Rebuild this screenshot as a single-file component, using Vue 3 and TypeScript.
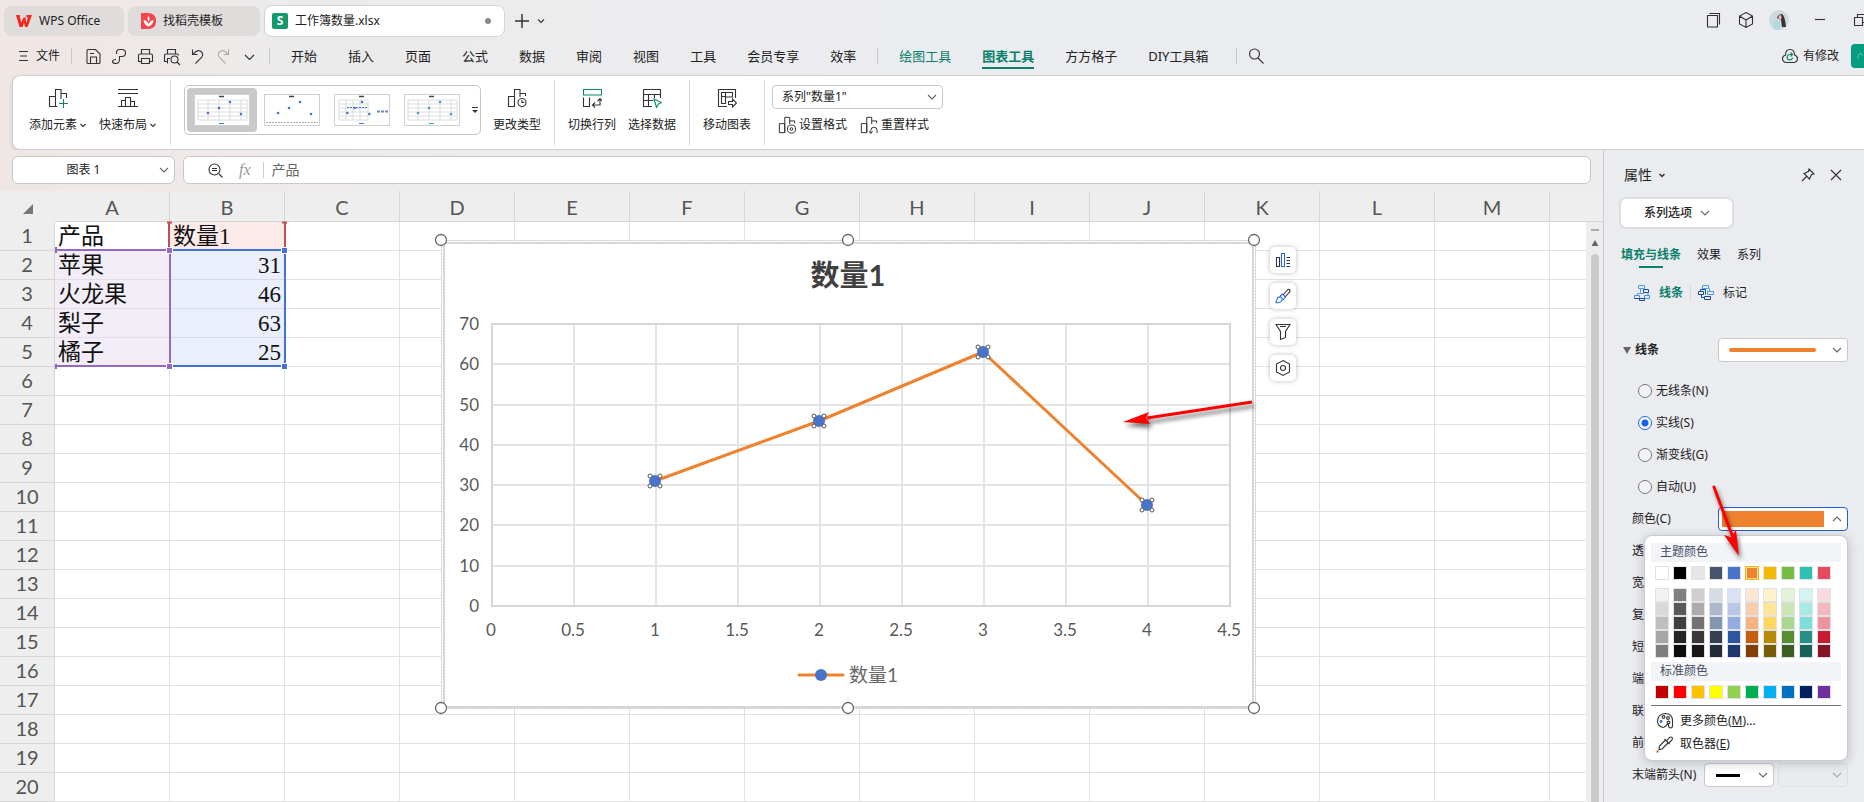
<script setup lang="ts">
import { ref } from 'vue'

interface Icon { name: string; d: string; faded?: boolean }
interface Row { label: string; value: string; num: number | null }

const quick: Icon[] = [
  { name: '保存', d: 'M3 16V3.5Q3 2.500 4 2.500H11.500L16 7V15.500Q16 16.500 15 16.500H4Q3 16.500 3 16M6.500 16.500V10H12.500V16.500M6 6.500H10' },
  { name: '输出', d: 'M6.500 7V5.500Q6.500 2.500 9.500 2.500H12Q15.500 2.500 15.500 6T12 9.500H9.500V12Q9.500 16.500 6 16.500Q2.500 16.500 2.500 14.500T6 12.500' },
  { name: '打印', d: 'M5.500 7V2.500H13.500V7M5.500 14.500H2.500V8.500Q2.500 7 4 7H15Q16.500 7 16.500 8.500V14.500H13.500M5.500 11.500H13.500V16.500H5.500Z' },
  { name: '打印预览', d: 'M5.500 7V2.500H13.500V7M5.500 14.500H2.500V8.500Q2.500 7 4 7H15Q16.500 7 16.500 8.500M5.500 16.500V11.500H8M16 12.500A3.500 3.500 0 1 1 9 12.500A3.500 3.500 0 1 1 16 12.500M15 15L18 18' },
  { name: '撤销', d: 'M4.500 2.500V7.500H9.500M4.500 7.500L8 4.500Q11 2.500 13.500 5T13.500 10.500L7.500 16.500' },
  { name: '恢复', d: 'M14.500 2.500V7.500H9.500M14.500 7.500L11 4.500Q8 2.500 5.500 5T5.500 10.500L11.500 16.500', faded: true },
  { name: '更多', d: 'M5 8L9.500 12.500L14 8' },
]

const menus = ['开始', '插入', '页面', '公式', '数据', '审阅', '视图', '工具', '会员专享', '效率']

const chartIcon = 'M1.500 18.500V8.500H7.500V18.500ZM7.500 18.500V1.500H13V9M13 5.500H18.500V8'

const columns = ['A', 'B', 'C', 'D', 'E', 'F', 'G', 'H', 'I', 'J', 'K', 'L', 'M']
const filled: Row[] = [
  { label: '产品', value: '数量1', num: null },
  { label: '苹果', value: '', num: 31 },
  { label: '火龙果', value: '', num: 46 },
  { label: '梨子', value: '', num: 63 },
  { label: '橘子', value: '', num: 25 },
]
const rows: Row[] = Array.from({ length: 20 }, (_, i) => filled[i] ?? { label: '', value: '', num: null })

const plot = { left: 492, right: 1230, top: 324, bottom: 606 }
const px = (v: number) => Math.round(plot.left + (v / 4.5) * (plot.right - plot.left))
const py = (v: number) => Math.round(plot.bottom - (v / 70) * (plot.bottom - plot.top))
const xs = [0, 0.5, 1, 1.5, 2, 2.5, 3, 3.5, 4, 4.5]
const ys = [0, 10, 20, 30, 40, 50, 60, 70]
const points = [31, 46, 63, 25].map((v, i) => ({ x: px(i + 1) - 1, y: py(v) }))
const linePoints = points.map(p => `${p.x},${p.y}`).join(' ')
const handles = [[441, 240], [848, 240], [1254, 240], [441, 708], [848, 708], [1254, 708]]

const thumbs = [
  { grid: true, color: '#4874cb', dashed: false },
  { grid: false, color: '#4874cb', dashed: false },
  { grid: true, color: '#4874cb', dashed: true },
  { grid: true, color: '#3aa6b9', dashed: false },
]
const dots = [[14, 19], [25, 14], [36, 8], [47, 20]]

const lineKind = ref('实线(S)')
const kinds = ['无线条(N)', '实线(S)', '渐变线(G)', '自动(U)']
const covered = ['透', '宽', '复', '短', '端', '联', '前']

const theme = ['#ffffff', '#000000', '#e7e6e6', '#44546a', '#4874cb', '#ee822f', '#f2ba02', '#75bd42', '#30c0b4', '#e54c5e']
const shades = [
  ['#f2f2f2', '#808080', '#d0cece', '#d6dce5', '#dae3f5', '#fce6d5', '#fff2cb', '#e3f2d9', '#d3f5f2', '#fadbdf'],
  ['#d9d9d9', '#595959', '#afabab', '#adb9ca', '#b6c7ea', '#f8cdac', '#ffe596', '#c8e5b3', '#a8ebe6', '#f5b7bf'],
  ['#bfbfbf', '#404040', '#767171', '#8497b0', '#91acdf', '#f5b482', '#ffd85e', '#acd78e', '#7ddfd8', '#ef949e'],
  ['#a6a6a6', '#262626', '#3b3838', '#333f50', '#2c55a2', '#c45f10', '#b58b02', '#578f30', '#249087', '#c81d31'],
  ['#7f7f7f', '#0d0d0d', '#181717', '#222a35', '#1d386c', '#823f0b', '#795d01', '#3a5f20', '#18605a', '#861422'],
]
const standard = ['#c00000', '#ff0000', '#ffc000', '#ffff00', '#92d050', '#00b050', '#00b0f0', '#0070c0', '#002060', '#7030a0']
</script>

<template>
  <div class="app">
    <header class="titlebar">
      <button class="doc wps">
        <svg width="16" height="14" viewBox="0 0 16 14"><path d="M0 1H4L5.500 8L7.500 3.500H9.500L10.500 8L12 3.500H9.500L10 1H16L11.500 13H9L8 9L6.500 13H3.500Z" fill="#f2291e" /><path d="M4 1L5.500 8M10 1L10.500 8" stroke="#fff" stroke-width="0.600" /></svg>
        WPS Office
      </button>
      <button class="doc docer">
        <svg width="15" height="16" viewBox="0 0 15 16"><path d="M0 0H7Q15 0 15 8T7 16H0Z" fill="#f0464c" /><path d="M7.500 13.500Q3 12 2.500 7Q6 7.500 7.500 11Q9 7.500 12.500 7Q12 12 7.500 13.500M7.500 8.500Q5.500 6 7.500 2.500Q9.500 6 7.500 8.500" fill="#fff" /></svg>
        找稻壳模板
      </button>
      <button class="doc current">
        <span class="sheet-logo">S</span>
        <span class="doc-name">工作簿数量.xlsx</span>
        <i class="dirty"></i>
      </button>
      <button class="plain new-tab" aria-label="新建"><svg width="16" height="16" viewBox="0 0 16 16"><path d="M8 1V15M1 8H15" stroke="#333" stroke-width="1.500" /></svg></button>
      <button class="plain" aria-label="标签列表"><svg width="10" height="10" viewBox="0 0 10 10" class="line"><path d="M2 3.500L5 6.500L8 3.500" /></svg></button>
      <div class="window-tools">
        <button class="plain" aria-label="窗口"><svg width="18" height="18" viewBox="0 0 18 18" class="line"><path d="M2.500 4.500H12.500V16H2.500ZM4.500 2.500H14.500V13.500" /></svg></button>
        <button class="plain" aria-label="应用"><svg width="18" height="18" viewBox="0 0 18 18" class="line"><path d="M9 1.500L15.500 5V13L9 16.500L2.500 13V5ZM2.500 5L9 9L15.500 5M9 9V16.500" /></svg></button>
        <button class="plain avatar" aria-label="账户">
          <svg width="20" height="20" viewBox="0 0 20 20"><circle cx="10" cy="10" r="10" fill="#ccd9dd" /><path d="M8 8Q9 4 13 4Q16 6 17 17L13 17L12 10Z" fill="#3a3033" /><ellipse cx="11" cy="7.500" rx="1.600" ry="2.400" fill="#e6bda9" /><path d="M4 19Q4 12 8 10L11 12Q12 16 11 20Z" fill="#b4d8e2" /></svg>
        </button>
        <button class="plain minimise" aria-label="最小化"><svg width="18" height="18" viewBox="0 0 18 18" class="line"><path d="M4 8.500H14" /></svg></button>
        <button class="plain" aria-label="还原"><svg width="18" height="18" viewBox="0 0 18 18" class="line"><path d="M3.500 6.500H11.500V14.500H3.500ZM6.500 6.500V3.500H14.500V11.500H11.500" /></svg></button>
      </div>
    </header>

    <nav class="menubar">
      <button class="plain file"><svg width="11" height="12" viewBox="0 0 11 12" class="line"><path d="M1 1.500H10M2 6H9M1 10.500H10" /></svg>文件</button>
      <i class="bar"></i>
      <button v-for="q in quick" :key="q.name" class="plain quick" :class="{ faded: q.faded }" :aria-label="q.name">
        <svg width="19" height="19" viewBox="0 0 19 19" class="line"><path :d="q.d" /></svg>
      </button>
      <i class="bar after-quick"></i>
      <div class="menus">
        <button v-for="m in menus" :key="m" class="plain menu">{{ m }}</button>
        <i class="bar"></i>
        <button class="plain menu green">绘图工具</button>
        <button class="plain menu green chosen">图表工具</button>
        <button class="plain menu">方方格子</button>
        <button class="plain menu">DIY工具箱</button>
      </div>
      <i class="bar after-menus"></i>
      <button class="plain search" aria-label="搜索"><svg width="18" height="18" viewBox="0 0 18 18" class="line"><circle cx="7.500" cy="7" r="5" /><path d="M11 11L16.500 16.500" /></svg></button>
      <button class="plain changed">
        <svg width="18" height="16" viewBox="0 0 18 16" class="line"><path d="M5 14.500Q1.500 14 1.500 10.500Q1.500 8 4.500 7Q4.500 1.500 9 1.500T13.500 7Q16.500 8 16.500 10.500Q16.500 14 13 14.500Z" /><path d="M11.500 9.500A2.700 2.700 0 1 1 9 6.500H11M9.500 4.500L11.500 6.500L9.500 8.500" stroke="#0b8a5f" /></svg>
        有修改
      </button>
      <button class="share" aria-label="分享"><svg width="18" height="16" viewBox="0 0 18 16"><path d="M5 14.500Q1.500 14 1.500 10.500Q1.500 8 4.500 7Q4.500 1.500 9 1.500T13.500 7" fill="none" stroke="#fff" /></svg></button>
    </nav>

    <section class="ribbon">
      <button class="tool wide">
        <svg width="20" height="20" viewBox="0 0 20 20" class="line"><path d="M1.500 18.500V8.500H7.500V18.500ZM7.500 18.500H9.500M7.500 18.500V1.500H13V11M13 5.500H18.500V10" /><path d="M15.500 11V20M11 15.500H20" stroke="#0b8a5f" /></svg>
        <span>添加元素<svg width="8" height="8" viewBox="0 0 8 8" class="line caret"><path d="M1.500 3L4 5.500L6.500 3" /></svg></span>
      </button>
      <button class="tool wide">
        <svg width="20" height="20" viewBox="0 0 20 20" class="line"><path d="M0 1.500H20M0 5.500H20M0 18.500H20M3.500 18.500V12.500H7.500M7.500 18.500V9.500H12.500V18.500M12.500 13.500H16.500V18.500" /></svg>
        <span>快速布局<svg width="8" height="8" viewBox="0 0 8 8" class="line caret"><path d="M1.500 3L4 5.500L6.500 3" /></svg></span>
      </button>
      <i class="divider"></i>
      <div class="gallery">
        <button v-for="(t, i) in thumbs" :key="i" class="thumb" :class="{ picked: i === 0 }" :aria-label="'样式 ' + (i + 1)">
          <svg width="56" height="32" viewBox="0 0 56 32">
            <rect x="0.500" y="0.500" width="55" height="31" fill="#fff" stroke="#d0d0d0" />
            <path v-if="t.grid" :d="t.dashed ? 'M5 6H34M5 10H34M5 14H34M5 18H34M5 22H34M5 26H34M5 6V26M12 6V26M19 6V26M26 6V26M34 6V26' : 'M4 6H53M4 10H53M4 14H53M4 18H53M4 22H53M4 26H53M4 6V26M14 6V26M25 6V26M36 6V26M47 6V26M53 6V26'" stroke="#dcdcdc" fill="none" />
            <path v-else d="M2 28.500H54" stroke="#aaa" stroke-dasharray="2 1" />
            <path d="M25 2.500H30" stroke="#444" stroke-width="1.500" />
            <path v-if="t.dashed" d="M13 13.500H34" stroke="#4874cb" stroke-dasharray="2 1" />
            <path v-if="t.dashed" d="M43 17.500H54" stroke="#6b87bd" stroke-width="2" stroke-dasharray="3 1" />
            <circle v-for="(d, k) in dots" :key="k" :cx="t.dashed ? 4 + d[0] * 2 / 3 : d[0]" :cy="d[1]" r="1.300" :fill="t.color" />
            <path v-if="t.grid" d="M25 29.500H30" :stroke="t.color" />
          </svg>
        </button>
        <button class="plain gallery-more" aria-label="更多样式"><svg width="8" height="8" viewBox="0 0 8 8"><path d="M1 1.500H7" stroke="#333" /><path d="M1 4H7L4 7Z" fill="#333" /></svg></button>
      </div>
      <button class="tool">
        <svg width="20" height="20" viewBox="0 0 20 20" class="line"><path :d="chartIcon" /><circle cx="15" cy="14.500" r="4" /><path d="M15 12V14.500H17.500" /></svg>
        <span>更改类型</span>
      </button>
      <i class="divider"></i>
      <button class="tool">
        <svg width="20" height="20" viewBox="0 0 20 20" class="line"><path d="M1.500 1.500H19.500V7H1.500Z" stroke="#0b8a5f" /><path d="M1.500 9.500V18.500H7.500V9.500M10.500 17H18V11M13 14.500L10.500 17L13 19.500M15.500 13L18 10.500L20 13" /></svg>
        <span>切换行列</span>
      </button>
      <button class="tool">
        <svg width="20" height="20" viewBox="0 0 20 20" class="line"><path d="M10 18.500H1.500V1.500H18.500V10M1.500 6.500H18.500M1.500 12.500H11M6.500 6.500V18.500M12.500 6.500V10" /><path d="M12 11L19.500 14.500L16.500 16L14.500 19.500Z" stroke="#0b8a5f" /></svg>
        <span>选择数据</span>
      </button>
      <i class="divider"></i>
      <button class="tool">
        <svg width="20" height="20" viewBox="0 0 20 20" class="line"><path d="M10 18.500H1.500V1.500H18.500V10M4.500 15.500V4.500H15.500V9H8.500V15.500ZM4.500 8.500H8.500M8.500 4.500V9M11.500 13.500H15.500V11L19.500 15L15.500 19V16.500H11.500Z" /></svg>
        <span>移动图表</span>
      </button>
      <i class="divider"></i>
      <div class="format">
        <div class="select element">
          <select aria-label="图表元素"><option>系列"数量1"</option></select>
          <svg width="10" height="8" viewBox="0 0 10 8" class="line arrow"><path d="M1 2L5 6L9 2" /></svg>
        </div>
        <div class="format-row">
          <button class="plain"><svg width="18" height="18" viewBox="0 0 20 20" class="line"><path :d="chartIcon" /><circle cx="15" cy="14.500" r="4.500" /><circle cx="15" cy="14.500" r="1.500" /></svg>设置格式</button>
          <button class="plain"><svg width="18" height="18" viewBox="0 0 20 20" class="line"><path :d="chartIcon" /><path d="M12 19V16Q12 12.500 15.500 12.500T19 16V19M10 17L12 19.500L14 17" /></svg>重置样式</button>
        </div>
      </div>
    </section>

    <div class="work">
      <main class="book">
        <div class="formula">
          <div class="select namebox">
            <select aria-label="名称框"><option>图表 1</option></select>
            <svg width="10" height="8" viewBox="0 0 10 8" class="line arrow"><path d="M1 2L5 6L9 2" /></svg>
          </div>
          <div class="editor">
            <svg width="17" height="17" viewBox="0 0 17 17" class="line"><circle cx="7.500" cy="7.500" r="5.500" /><path d="M5 6.500H10M5 8.500H10M12 12L15.500 15.500" /></svg>
            <span class="fx">fx</span>
            <input aria-label="编辑栏" value="产品" />
          </div>
        </div>

        <div class="canvas">
          <table class="cells">
            <colgroup><col class="gutter" /><col v-for="c in columns" :key="c" class="column" /><col /></colgroup>
            <thead>
              <tr>
                <th class="corner"><svg width="10" height="10" viewBox="0 0 10 10"><path d="M10 0V10H0Z" fill="#777" /></svg></th>
                <th v-for="c in columns" :key="c">{{ c }}</th>
                <th class="tail"></th>
              </tr>
            </thead>
            <tbody>
              <tr v-for="(r, i) in rows" :key="i">
                <th>{{ i + 1 }}</th>
                <td :class="{ category: i > 0 && i < 5 }">{{ r.label }}</td>
                <td :class="{ seriesname: i === 0, values: i > 0 && i < 5 }">{{ r.num ?? r.value }}</td>
                <td v-for="c in 11" :key="c"></td>
                <td class="tail"></td>
              </tr>
            </tbody>
          </table>

          <svg class="ranges" width="240" height="160" viewBox="50 215 240 160">
            <path d="M169 222V247M285 222V247" stroke="#c0504d" stroke-width="2" />
            <path d="M167 222.500H172M282 222.500H287" stroke="#c0504d" stroke-width="2" />
            <path d="M56 250H170V366H56" fill="none" stroke="#9467c0" stroke-width="2" />
            <path d="M56 247V253M56 364V369" stroke="#9467c0" stroke-width="2" />
            <path d="M170 250H285V366H170" fill="none" stroke="#4472d0" stroke-width="2" />
            <path d="M170 250V366" stroke="#9467c0" stroke-width="2" />
            <g stroke="#fff">
              <rect x="166.500" y="247.500" width="6" height="6" fill="#9467c0" /><rect x="166.500" y="363.500" width="6" height="6" fill="#9467c0" />
              <rect x="281.500" y="247.500" width="6" height="6" fill="#4472d0" /><rect x="281.500" y="363.500" width="6" height="6" fill="#4472d0" />
            </g>
          </svg>

          <svg class="chart" width="834" height="488" viewBox="431 230 834 488">
            <rect x="441" y="240" width="814" height="468" fill="#fff" />
            <rect x="441.500" y="240.500" width="814" height="468" fill="none" stroke="#c8c8c8" stroke-dasharray="2 1" />
            <rect x="444" y="243" width="809" height="464" fill="#fff" stroke="#d6d6d6" stroke-width="2" />
            <text x="848" y="286" class="chart-title">数量1</text>
            <g stroke="#e3e3e3" stroke-width="2">
              <line v-for="x in xs" :key="x" :x1="px(x)" :x2="px(x)" :y1="plot.top" :y2="plot.bottom" />
              <line v-for="y in ys" :key="y" :x1="plot.left" :x2="plot.right" :y1="py(y)" :y2="py(y)" />
            </g>
            <rect :x="plot.left" :y="plot.top" :width="plot.right - plot.left" :height="plot.bottom - plot.top" fill="none" stroke="#d6d6d6" stroke-width="2" />
            <text v-for="y in ys" :key="'y' + y" x="479" :y="py(y) + 6" class="tick y">{{ y }}</text>
            <text v-for="x in xs" :key="'x' + x" :x="px(x) - 1" y="636" class="tick">{{ x }}</text>
            <polyline :points="linePoints" fill="none" stroke="#ee822f" stroke-width="3" stroke-linejoin="round" />
            <g v-for="p in points" :key="p.x">
              <circle :cx="p.x" :cy="p.y" r="6" fill="#4874cb" />
              <g fill="#fff" stroke="#555">
                <circle :cx="p.x - 5" :cy="p.y - 5" r="2" /><circle :cx="p.x + 5" :cy="p.y - 5" r="2" />
                <circle :cx="p.x - 5" :cy="p.y + 5" r="2" /><circle :cx="p.x + 5" :cy="p.y + 5" r="2" />
              </g>
            </g>
            <path d="M799 675H843" stroke="#ee822f" stroke-width="3" stroke-linecap="round" />
            <circle cx="821" cy="675" r="6" fill="#4874cb" />
            <text x="849" y="682" class="legend">数量1</text>
            <circle v-for="(h, i) in handles" :key="i" :cx="h[0]" :cy="h[1]" r="5.500" fill="#fff" stroke="#666" stroke-width="1.300" />
            <g class="shadowed"><path d="M1252 402L1147 418" stroke="#f00" stroke-width="3" /><path d="M1123 422L1149 412L1146 418L1150 424Z" fill="#f00" /></g>
          </svg>

          <div class="chart-tools">
            <button aria-label="图表元素"><svg width="16" height="16" viewBox="0 0 16 16" class="line"><path d="M1.500 5.500H4.500V14.500H1.500ZM11.500 5.500H15M11.500 8.500H15M11.500 11.500H15M11.500 14.500H15" /><path d="M6.500 1.500H9.500V14.500H6.500Z" stroke="#2468f2" /></svg></button>
            <button aria-label="图表样式"><svg width="16" height="16" viewBox="0 0 16 16" class="line"><path d="M8 7L13 1.500Q15 1 15 3.500L10 9" /><path d="M0.500 14.500Q2 13 2 11Q3 8.500 5.500 9Q8 10 7 12.500Q5 15.500 0.500 14.500M5.500 9V7.500L7.500 6L10.500 9L8.500 11.500H7" stroke="#2468f2" /></svg></button>
            <button aria-label="图表筛选器"><svg width="16" height="18" viewBox="0 0 16 18" class="line"><path d="M1 1.500H15L10.500 8.500V14.500L5.500 16.500V8.500ZM5 3.500H11" /></svg></button>
            <button aria-label="设置"><svg width="16" height="18" viewBox="0 0 16 18" class="line"><path d="M8 1.500L14.500 5V13L8 16.500L1.500 13V5Z" /><circle cx="8" cy="9" r="2.500" /></svg></button>
          </div>

          <div class="scroll">
            <i class="split"></i>
            <svg width="8" height="6" viewBox="0 0 8 6"><path d="M4 0L7.500 6H0.500Z" fill="#666" /></svg>
            <i class="track"></i>
          </div>
        </div>
      </main>

      <aside class="panel">
        <div class="panel-head">
          <button class="plain panel-title">属性<svg width="8" height="8" viewBox="0 0 8 8" class="line caret"><path d="M1.500 3L4 5.500L6.500 3" stroke-width="1.500" /></svg></button>
          <button class="plain" aria-label="固定"><svg width="14" height="14" viewBox="0 0 14 14" class="line"><path d="M8 1L13 6L10.500 6.500L8.500 11L3 5.500L7.500 3.500ZM5.500 8.500L1 13" /></svg></button>
          <button class="plain close" aria-label="关闭"><svg width="12" height="12" viewBox="0 0 12 12" class="line"><path d="M1 1L11 11M11 1L1 11" /></svg></button>
        </div>
        <button class="series">系列选项<svg width="10" height="8" viewBox="0 0 10 8" class="line soft"><path d="M1 2L5 6L9 2" /></svg></button>
        <div class="panel-tabs">
          <button class="plain on">填充与线条</button><button class="plain">效果</button><button class="plain">系列</button>
        </div>
        <div class="sub-tabs">
          <button class="plain on"><svg width="16" height="16" viewBox="0 0 16 16" fill="none"><path d="M4.500 0.500H10.500V3.500H4.500ZM6.500 3.500V7.500M3.500 11V8.500H10M14 8V11" stroke="#4e9cf0" /><path d="M9.500 4.500H14.500V7.500H9.500Z" stroke="#174a9c" /><path d="M10.500 10.500H15.500V13.500H10.500ZM0.500 10.500H5.500V13.500H0.500Z" stroke="#4e8cf0" /><path d="M5.500 13.500H10.500V15.500H5.500ZM0.500 13.500H5.500" stroke="#174a9c" /></svg>线条</button>
          <i class="bar"></i>
          <button class="plain"><svg width="16" height="16" viewBox="0 0 16 16" fill="none"><path d="M4.500 3.500V0.500H10.500V3.500H4.500M9.500 6.500H15.500V9.500H9.500ZM11.500 3.500V6.500" stroke="#4e9cf0" /><path d="M0.500 6.500H5.500V9.500H0.500ZM2.500 6.500V4.500H7.500V9.500M3.500 9.500V12.500H6M6.500 11.500H12.500V14.500H6.500Z" stroke="#174a9c" /></svg>标记</button>
        </div>
        <div class="section">
          <button class="plain section-name"><svg width="8" height="7" viewBox="0 0 8 7"><path d="M0 0H8L4 7Z" fill="#666" /></svg>线条</button>
          <div class="select field">
            <select aria-label="线条样式"></select>
            <i class="sample"></i>
            <svg width="10" height="8" viewBox="0 0 10 8" class="line arrow"><path d="M1 2L5 6L9 2" /></svg>
          </div>
        </div>
        <div class="options">
          <label v-for="k in kinds" :key="k" class="row option"><input v-model="lineKind" type="radio" name="kind" :value="k" />{{ k }}</label>
          <div class="row">
            <label for="line-color">颜色(C)</label>
            <div class="select field open">
              <select id="line-color"></select>
              <i class="color"></i>
              <svg width="10" height="8" viewBox="0 0 10 8" class="line arrow"><path d="M1 6L5 2L9 6" /></svg>
            </div>
            <div class="popup">
              <h4>主题颜色</h4>
              <div class="swatches">
                <button v-for="(c, i) in theme" :key="c" class="swatch" :class="{ active: i === 5 }" :style="{ background: c }" :aria-label="c"></button>
              </div>
              <div class="swatches shades">
                <template v-for="(line, i) in shades" :key="i">
                  <button v-for="c in line" :key="c" class="swatch" :style="{ background: c }" :aria-label="c"></button>
                </template>
              </div>
              <h4>标准颜色</h4>
              <div class="swatches">
                <button v-for="c in standard" :key="c" class="swatch" :style="{ background: c }" :aria-label="c"></button>
              </div>
              <hr />
              <button class="plain action"><svg width="18" height="18" viewBox="0 0 18 18" class="line"><path d="M9 1.500Q16.500 1.500 16.500 9V13.500Q16.500 16 14.500 16T12.500 13.500T10.500 13Q9.500 15.500 7 15.500Q1.500 14 1.500 9Q2 2 9 1.500Z" /><circle cx="7.500" cy="5" r="1.400" /><circle cx="12" cy="6" r="1.400" /><circle cx="12.500" cy="10.500" r="1.400" /><circle cx="5" cy="9.500" r="1.400" fill="#2468f2" stroke="none" /></svg><span>更多颜色(<u>M</u>)...</span></button>
              <button class="plain action"><svg width="18" height="18" viewBox="0 0 18 18" class="line"><path d="M9.500 5L3.500 11L3 14.500L6 14L12.500 7.500M8.500 4L13.500 9M10.500 6L13.500 2.500Q15 1.500 16 2.500T16 5L13 8" /><rect x="0.500" y="15.500" width="2" height="2" fill="#c45f10" stroke="none" /></svg><span>取色器(<u>E</u>)</span></button>
            </div>
            <svg class="pointer shadowed" width="40" height="80" viewBox="1706 480 40 80"><path d="M1714 487L1732 535" stroke="#f00" stroke-width="3" stroke-linecap="round" /><path d="M1739 556L1724 535L1731 537L1736 530Z" fill="#f00" /></svg>
          </div>
          <div v-for="c in covered" :key="c" class="row">{{ c }}</div>
          <div class="row">
            <label for="end-arrow">末端箭头(N)</label>
            <div class="ends">
              <div class="select"><select id="end-arrow"></select><i class="dash"></i><svg width="10" height="8" viewBox="0 0 10 8" class="line arrow"><path d="M1 2L5 6L9 2" /></svg></div>
              <div class="select off"><select disabled aria-label="箭头大小"></select><svg width="10" height="8" viewBox="0 0 10 8" class="line arrow"><path d="M1 2L5 6L9 2" /></svg></div>
            </div>
          </div>
        </div>
      </aside>
    </div>
  </div>
</template>

<style>
body { overflow: hidden; }
</style>

<style scoped>
.app {
  min-height: 100vh;
  display: flex;
  flex-direction: column;
  overflow: hidden;
  background: linear-gradient(90deg, #f0e6e4 0, #ecebeb 300px, #ebecf0 900px);
  font: 12px/16px "Noto Sans", "Noto Sans CJK SC", sans-serif;
  color: #222;
}
.app * { box-sizing: border-box; }
button, select, input { font: inherit; color: inherit; }
button { padding: 0; border: 0; background: none; white-space: nowrap; }
.plain { display: flex; align-items: center; }
.line { fill: none; stroke: #333; stroke-width: 1.100; flex: none; }
.caret { margin-left: 2px; }
.bar { width: 1px; height: 16px; background: #c9c9cc; flex: none; }

.titlebar { display: flex; align-items: center; gap: 4px; height: 37px; padding: 5px 0 0 4px; }
.doc { display: flex; align-items: center; gap: 7px; height: 30px; padding: 0 12px; border-radius: 8px; background: #e0dcdb; }
.wps { width: 120px; }
.docer { width: 132px; padding-left: 13px; }
.current { width: 241px; height: 32px; padding: 0 13px 0 7px; background: #fff; border: 1px solid #d4d4d4; }
.sheet-logo { width: 16px; height: 16px; border-radius: 2px; background: #13996a; color: #fff; font-weight: 700; }
.doc-name { flex: 1; text-align: left; }
.dirty { width: 6px; height: 6px; border-radius: 50%; background: #8a8a8a; }
.new-tab { margin-left: 5px; margin-right: 2px; }
.window-tools { display: flex; align-items: center; gap: 14px; margin-left: auto; margin-right: -5px; }
.window-tools .plain { margin-bottom: 3px; }
.avatar { margin-right: 8px; }
.window-tools .minimise { margin-right: 8px; }

.menubar { display: flex; align-items: center; height: 38px; padding-left: 18px; overflow: hidden; flex: none; }
.file { gap: 7px; margin-right: 11px; }
.quick { width: 26px; height: 26px; justify-content: center; }
.bar + .quick { margin-left: 8px; }
.faded { opacity: 0.350; }
.after-quick { margin: 0 21px 0 7px; }
.menus { display: flex; align-items: center; gap: 31px; font-size: 13px; }
.menus .bar { margin: 0 -10px; }
.menu { height: 26px; border-bottom: 2px solid transparent; border-top: 2px solid transparent; }
.green { color: #08806a; }
.chosen { font-weight: 700; border-bottom-color: #08806a; }
.after-menus { margin-left: 28px; }
.search { margin-left: 10px; }
.changed { gap: 4px; margin-left: auto; margin-right: 12px; }
.share { width: 13px; height: 24px; padding-left: 6px; border-radius: 4px 0 0 4px; background: #059c7f; overflow: hidden; display: flex; align-items: center; }

.ribbon {
  display: flex;
  height: 75px;
  flex: none;
  margin-left: 12px;
  padding-left: 10px;
  background: #fff;
  border: 1px solid #cfcfd1;
  border-right: 0;
  border-radius: 8px 0 0 8px;
  box-shadow: 0 2px 4px #0002;
}
.tool { width: 60px; display: flex; flex-direction: column; align-items: center; padding-top: 12px; gap: 9px; height: 73px; }
.wide { width: 70px; }
.divider { width: 1px; margin: 4px 7px; background: #d6d6d6; flex: none; }
.gallery { display: flex; align-items: center; width: 297px; height: 50px; margin: 9px 6px 0 6px; padding-left: 2px; border: 1px solid #c6c6c6; border-radius: 5px; }
.thumb { width: 70px; height: 44px; border-radius: 4px; display: flex; align-items: center; justify-content: center; flex: none; }
.picked { background: #c9c9c9; }
.gallery-more { margin-left: 4px; }
.format { padding-top: 9px; }
.select { position: relative; height: 24px; }
.select select {
  display: block;
  width: 100%;
  height: 100%;
  appearance: none;
  border: 1px solid #c6c8cc;
  border-radius: 4px;
  background: #fff;
  padding: 0 9px;
}
.select .arrow { position: absolute; right: 6px; top: calc(50% - 4px); pointer-events: none; stroke: #666; }
.soft { stroke: #666; }
.select i { position: absolute; pointer-events: none; }
.element { width: 171px; }
.format-row { display: flex; gap: 13px; padding: 7px 0 0 6px; }
.format-row .plain { gap: 3px; }

.work { display: flex; flex: 1; min-height: 0; }
.book { flex: 1; min-width: 0; display: flex; flex-direction: column; }
.formula { display: flex; gap: 8px; padding: 6px 12px 7px; background: linear-gradient(90deg, #f0e6e4, #ededee 500px); }
.namebox { width: 163px; height: 28px; }
.namebox select { border-radius: 6px; text-align: center; text-align-last: center; padding: 0 28px 0 8px; }
.editor { flex: 1; display: flex; align-items: center; height: 28px; padding-left: 23px; background: #fff; border: 1px solid #c6c8cc; border-radius: 6px; }
.fx { font: italic 16px/20px "Liberation Serif", serif; color: #999; margin: 0 12px 0 15px; }
.editor input { flex: 1; height: 16px; border: 0; border-left: 1px solid #ccc; padding: 0 8px; font-size: 14px; color: #666; outline: 0; background: none; }

.canvas { position: relative; flex: 1; background: #fff; overflow: hidden; }
.cells { width: 100%; table-layout: fixed; border-collapse: separate; border-spacing: 0; }
.gutter { width: 55px; }
.column { width: 115px; }
.cells th { font: 20px/26px Lato, sans-serif; color: #555; background: #eee; border-right: 1px solid #d6d6d6; border-bottom: 1px solid #d6d6d6; padding: 0 0 2px; }
.cells thead th { height: 31px; padding: 2px 0 0; }
.cells .corner { border-right-color: #eee; border-bottom-color: #eee; text-align: right; padding-right: 21px; line-height: 10px; }
.cells tbody th { height: 29px; }
.cells td { height: 29px; padding: 2px 3px 0; font: 23px/26px "Liberation Serif", "Noto Sans CJK SC", serif; color: #111; border-right: 1px solid #e2e2e2; border-bottom: 1px solid #e2e2e2; white-space: nowrap; }
.cells .category { background: #f3edf8; border-bottom-color: #e4dcec; }
.cells .seriesname { background: #fbeae8; }
.cells .values { background: #eaeffb; border-bottom-color: #d9d9ee; text-align: right; }
.cells .tail { border-right: 0; }
.ranges { position: absolute; left: 50px; top: 24px; }
.chart { position: absolute; left: 431px; top: 39px; }
.chart-title { font: 700 29px Lato, "Noto Sans CJK SC", sans-serif; fill: #404040; text-anchor: middle; }
.tick { font: 17px Lato, sans-serif; fill: #595959; text-anchor: middle; }
.tick.y { text-anchor: end; }
.legend { font: 19px Lato, "Noto Sans CJK SC", sans-serif; fill: #666; }
.shadowed { filter: drop-shadow(2px 4px 2px #0008); }
.chart-tools { position: absolute; left: 1270px; top: 56px; display: flex; flex-direction: column; gap: 10px; }
.chart-tools button { width: 26px; height: 26px; border-radius: 5px; background: #fff; box-shadow: 0 0 5px #0004; display: flex; align-items: center; justify-content: center; }
.scroll { position: absolute; right: 0; top: 31px; bottom: 0; width: 17px; display: flex; flex-direction: column; align-items: center; padding-top: 7px; background: #ededee; }
.split { width: 8px; height: 2px; background: #aaa; margin-bottom: 9px; }
.track { width: 8px; flex: 1; margin-top: 8px; background: #c9cbcd; border-radius: 4px 4px 0 0; }

.panel { width: 261px; flex: none; padding: 7px 16px 0 17px; border-left: 1px solid #cbccd0; background: #ebecf0; }
.panel-head { display: flex; align-items: center; height: 36px; padding-left: 3px; }
.panel-title { flex: 1; font-size: 14px; }
.panel-title .caret { margin-left: 6px; }
.close { margin: 0 6px 0 15px; }
.series { display: flex; align-items: center; gap: 8px; width: 111px; height: 28px; margin-top: 6px; padding-left: 23px; border-radius: 5px; background: #fff; box-shadow: 0 0 0 2px #dcdee3; font-weight: 500; }
.panel-tabs { display: flex; gap: 16px; margin-top: 13px; height: 30px; }
.on { color: #08806a; font-weight: 700; position: relative; }
.panel-tabs .on::after { content: ""; position: absolute; left: 18px; right: 18px; bottom: 2px; height: 2px; background: #08806a; }
.sub-tabs { display: flex; align-items: center; gap: 7px; height: 24px; margin-top: 11px; padding-left: 13px; }
.sub-tabs .plain { gap: 9px; }
.sub-tabs .bar { background: #d6d8dc; }
.section { display: flex; justify-content: space-between; align-items: center; margin-top: 33px; height: 24px; padding-left: 2px; }
.section-name { gap: 4px; font-weight: 700; }
.field { width: 130px; }
.sample { left: 11px; top: 10px; width: 87px; height: 4px; border-radius: 2px; background: #ee822f; }
.options { margin-top: 13px; }
.row { position: relative; display: flex; align-items: center; justify-content: space-between; height: 32px; padding-left: 11px; }
.option { justify-content: flex-start; padding-left: 17px; gap: 4px; }
.option input { appearance: none; width: 14px; height: 14px; margin: 0; border: 1px solid #777; border-radius: 50%; background: #f2f3f6; }
.option input:checked { border-color: #1660f0; background: radial-gradient(circle, #1660f0 3px, #fff 4px); }
.open select { border: 1px solid #2360cf; }
.color { left: 4px; top: 4px; width: 102px; height: 16px; background: #ee822f; }
.popup { position: absolute; z-index: 2; right: 0; top: 32px; width: 204px; height: 226px; padding: 7px 6px 0; border: 1px solid #c9cbd2; border-radius: 8px; background: #fff; box-shadow: 0 2px 12px #0003; }
h4 { margin: 0 0 4px; padding: 0 9px; height: 19px; background: #f3f4f7; color: #434c66; font-weight: 400; line-height: 18px; }
.swatches { display: grid; grid-template-columns: repeat(10, 14px); column-gap: 4px; margin: 0 0 8px 4px; }
.swatch { height: 14px; border: 1px solid #e0e1e6; }
.active { border: 1px solid #ffb400; box-shadow: inset 0 0 0 1px #ffe0a0; }
.shades { margin-bottom: 4px; }
hr { margin: -2px 0 3px; border: 0; border-top: 1px solid #777; }
.action { height: 23px; gap: 6px; padding-left: 5px; }
.pointer { position: absolute; z-index: 3; right: 102px; top: -23px; }
.ends { display: flex; gap: 4px; }
.ends .select { width: 70px; }
.dash { left: 12px; top: 11px; width: 24px; height: 3px; background: #000; }
.off { opacity: 0.500; }
.off select { background: #e9eaed; }
</style>
